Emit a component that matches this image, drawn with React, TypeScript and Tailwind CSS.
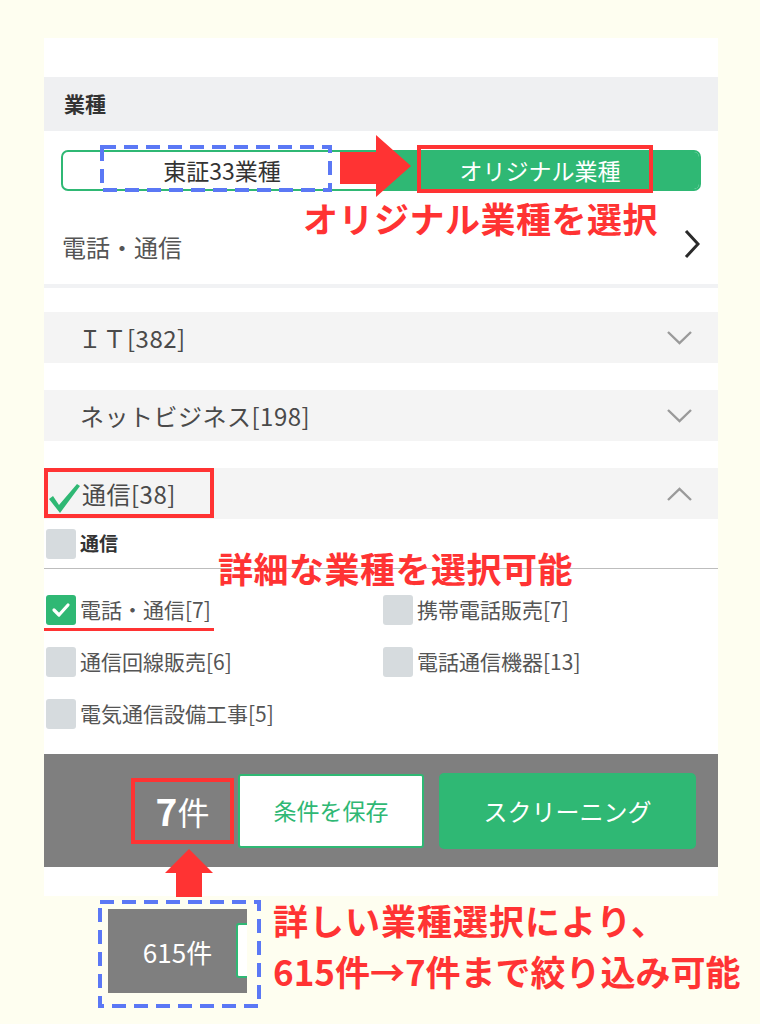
import type { ReactNode } from "react";

const subItems = [
  ["電話・通信[7]", "携帯電話販売[7]"],
  ["通信回線販売[6]", "電話通信機器[13]"],
  ["電気通信設備工事[5]", ""],
];

function Chevron({ up }: { up?: boolean }) {
  return (
    <svg width="27" height="16" viewBox="0 0 27 16" className="mr-[25px]">
      <polyline
        points={up ? "2,14 13.5,3 25,14" : "2,2 13.5,13 25,2"}
        fill="none"
        stroke="#9a9a9a"
        strokeWidth="2.4"
      />
    </svg>
  );
}

function Box({ checked }: { checked?: boolean }) {
  return (
    <div
      className={
        checked
          ? "w-[30px] h-[30px] rounded-[3px] bg-[#2fb874] flex items-center justify-center shrink-0"
          : "w-[30px] h-[30px] rounded-[3px] bg-[#d6dbde] shrink-0"
      }
    >
      {checked && (
        <svg width="20" height="16" viewBox="0 0 20 16">
          <polyline points="3,8 8,13 17,3" fill="none" stroke="white" strokeWidth="3.2" strokeLinecap="round" strokeLinejoin="round" />
        </svg>
      )}
    </div>
  );
}

function Row({ children, up }: { children: ReactNode; up?: boolean }) {
  return (
    <div className="h-[51px] bg-[#f4f4f4] flex items-center justify-between text-[24px] tracking-[0.5px] text-[#4a4a4a]">
      {children}
      <Chevron up={up} />
    </div>
  );
}

export default function App() {
  return (
    <div className="relative w-[760px] h-[1024px] overflow-hidden bg-[#fefef0] font-['Noto_Sans_CJK_JP',sans-serif]">
      <div className="pt-[38px] pl-[44px]">
        <div className="w-[674px] bg-white">
          <div className="h-[39px]" />
          <div className="h-[54px] bg-[#eff0f2] flex items-center px-[20px] text-[21px] font-bold text-[#333]">
            業種
          </div>

          <div className="px-[17px] pt-[19px]">
            <div className="flex h-[41px] rounded-[7px] border-2 border-[#2fb874] overflow-hidden text-[23px]">
              <div className="flex-1 flex items-center justify-center text-[#333]">東証33業種</div>
              <div className="flex-1 flex items-center justify-center bg-[#2fb874] text-white">オリジナル業種</div>
            </div>
          </div>

          <div className="h-[93px] flex items-center justify-between pt-[12px] pl-[18px] pr-[18px] text-[24px] text-[#555]">
            <span className="mt-[6px]">電話・通信</span>
            <svg width="16" height="30" viewBox="0 0 16 30">
              <polyline points="2,2 14,15 2,28" fill="none" stroke="#2a2a2a" strokeWidth="3" />
            </svg>
          </div>
          <div className="h-[4px] bg-[#f1f2f4]" />

          <div className="mt-[24px] flex flex-col gap-[27px]">
            <Row>
              <span className="pl-[34px]">ＩＴ[382]</span>
            </Row>
            <Row>
              <span className="pl-[36px]">ネットビジネス[198]</span>
            </Row>
            <Row up>
              <div className="flex items-center">
                <svg width="36" height="36" viewBox="0 0 36 36" className="ml-[2px] mt-[8px]">
                  <path d="M3 19 L7 16 L13 25 L31 4 L34 6 L14 33 Z" fill="#2fb874" />
                </svg>
                <span>通信[38]</span>
              </div>
            </Row>
          </div>

          <div className="h-[50px] flex items-center gap-[4px] pl-[2px] border-b border-[#bdbdbd] text-[19px] font-bold text-[#333]">
            <Box />
            <span>通信</span>
          </div>

          <div className="pt-[25px] pb-[26px] pl-[2px] flex flex-col gap-[22px] text-[21px] text-[#555]">
            {subItems.map((r, i) => (
              <div key={i} className="grid grid-cols-[337px_1fr] h-[30px]">
                {r.map((t, j) =>
                  t ? (
                    <div key={j} className="flex items-center gap-[4px]">
                      <Box checked={i === 0 && j === 0} />
                      <span>{t}</span>
                    </div>
                  ) : (
                    <div key={j} />
                  )
                )}
              </div>
            ))}
          </div>

          <div className="h-[113px] bg-[#7f7f7f] flex items-center pl-[87px]">
            <div className="w-[103px] h-[66px] border-4 border-[#ff3333] flex items-center justify-center text-white">
              <span className="text-[37px] font-bold">7</span>
              <span className="text-[32px]">件</span>
            </div>
            <div className="ml-[4px] w-[186px] h-[74px] bg-white border-2 border-[#2fb874] rounded-[3px] flex items-center justify-center text-[23px] text-[#2fb874]">
              条件を保存
            </div>
            <div className="ml-[15px] w-[257px] h-[76px] bg-[#2fb874] rounded-[5px] flex items-center justify-center text-[24px] text-white">
              スクリーニング
            </div>
          </div>
          <div className="h-[29px]" />
        </div>
      </div>

      {/* annotations */}
      <svg className="absolute left-[100px] top-[145px]" width="232" height="47" viewBox="0 0 232 47">
        <rect x="2" y="2" width="228" height="43" fill="none" stroke="#5b78f5" strokeWidth="4" strokeDasharray="14 8" />
      </svg>
      <svg className="absolute left-[340px] top-[135px]" width="72" height="63" viewBox="0 0 72 63">
        <polygon points="0,17 36,17 36,0 71,31 36,62 36,49 0,49" fill="#ff3333" />
      </svg>
      <div className="absolute left-[417px] top-[145px] w-[236px] h-[48px] border-4 border-[#ff3333]" />
      <div className="absolute left-[303px] top-[200px] whitespace-nowrap text-[35px] tracking-[0.5px] leading-none font-bold text-[#ff3333]">
        オリジナル業種を選択
      </div>

      <div className="absolute left-[44px] top-[468px] w-[170px] h-[50px] border-4 border-[#ff3333]" />
      <div className="absolute left-[218px] top-[550px] whitespace-nowrap text-[35px] tracking-[0.5px] leading-none font-bold text-[#ff3333]">
        詳細な業種を選択可能
      </div>
      <div className="absolute left-[44px] top-[628px] w-[170px] h-[3px] bg-[#ff3333]" />

      <svg className="absolute left-[165px] top-[849px]" width="48" height="48" viewBox="0 0 48 48">
        <polygon points="24,0 48,24 37,24 37,48 11,48 11,24 0,24" fill="#ff3333" />
      </svg>

      <svg className="absolute left-[98px] top-[900px]" width="163" height="108" viewBox="0 0 163 108">
        <rect x="2" y="2" width="159" height="104" fill="none" stroke="#5b78f5" strokeWidth="4" strokeDasharray="14 8" />
      </svg>
      <div className="absolute left-[108px] top-[909px] w-[139px] h-[84px] bg-[#7f7f7f] flex items-center justify-center text-[26px] text-white">
        615件
        <div className="absolute right-0 top-[14px] w-[11px] h-[55px] bg-white border-2 border-r-0 border-[#2fb874] rounded-l-[3px]" />
      </div>
      <div className="absolute left-[273px] top-[902px] whitespace-nowrap text-[35px] tracking-[1px] leading-none font-bold text-[#ff3333]">
        詳しい業種選択により、
      </div>
      <div className="absolute left-[273px] top-[953px] whitespace-nowrap text-[35px] leading-none font-bold text-[#ff3333]">
        615件→7件まで絞り込み可能
      </div>
    </div>
  );
}
